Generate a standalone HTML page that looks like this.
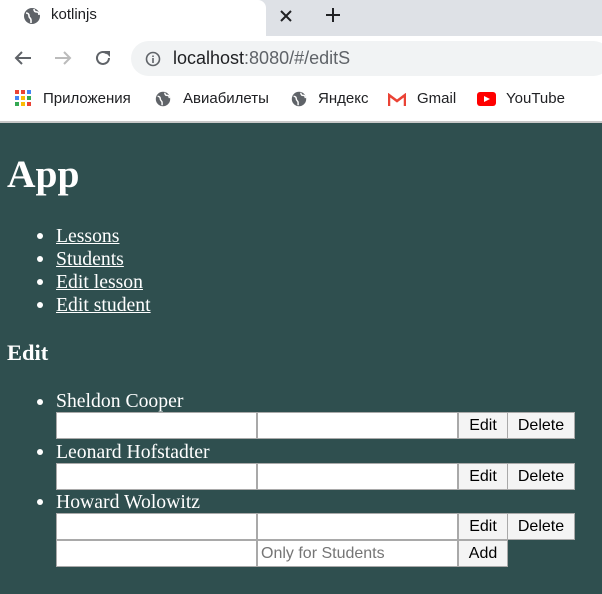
<!DOCTYPE html>
<html><head><meta charset="utf-8"><style>
*{margin:0;padding:0;box-sizing:border-box}
body{width:602px;height:594px;overflow:hidden;background:#2f4f4f;font-family:"Liberation Serif",serif;color:#fff;position:relative}
.a{position:absolute}
.ui{font-family:"Liberation Sans",sans-serif}
.tabbar{left:0;top:0;width:602px;height:36px;background:#dee1e6}
.tab{left:0;top:0;width:266px;height:36px;background:#fff;border-radius:0 8px 0 0}
.bar{left:0;top:36px;width:602px;height:85px;background:#fff}
.omni{left:131px;top:41px;width:480px;height:35px;background:#f1f3f4;border-radius:18px}
.sep{left:0;top:121px;width:602px;height:2px;background:#c8c8c8}
.li{font-size:19.7px;left:56px;line-height:23px}
.li u{text-decoration:underline}
.dot{width:6px;height:6px;border-radius:3px;background:#fff;left:37px}
.in{background:#fff;border:1px solid #a9a9a9;height:27px;width:201px}
.btn{background:#f4f4f4;border:1px solid #a9a9a9;height:27px;color:#000;font:16px "Liberation Sans",sans-serif;text-align:center;line-height:25px}
</style></head><body>
<div class="a tabbar"></div>
<div class="a tab"></div>
<svg class="a" style="left:22px;top:6px" width="20" height="20" viewBox="0 0 20 20"><circle cx="10" cy="10" r="8" fill="#5f6368"/><path d="M4 7c2 0 3 1 3 3s2 2 2 4v3M12 3c0 2 1 3 3 3s2 2 2 3" stroke="#fff" stroke-width="1.6" fill="none"/></svg>
<div class="a ui" style="left:51px;top:6px;font-size:15px;color:#202124">kotlinjs</div>
<svg class="a" style="left:280px;top:10px" width="12" height="12"><path d="M1 1l10 10M11 1L1 11" stroke="#202124" stroke-width="2"/></svg>
<svg class="a" style="left:325px;top:7px" width="16" height="16"><path d="M8 1v14M1 8h14" stroke="#202124" stroke-width="2"/></svg>
<div class="a bar"></div>
<div class="a omni"></div>
<svg class="a" style="left:14px;top:50px" width="18" height="16"><path d="M17 8H2M8 2L2 8l6 6" stroke="#5f6368" stroke-width="2" fill="none"/></svg>
<svg class="a" style="left:54px;top:50px" width="18" height="16"><path d="M1 8h15M10 2l6 6-6 6" stroke="#bbb" stroke-width="2" fill="none"/></svg>
<svg class="a" style="left:94px;top:49px" width="18" height="18" viewBox="0 0 18 18"><path d="M15 9a6 6 0 1 1-2-4.5" stroke="#5f6368" stroke-width="2" fill="none"/><path d="M10 2h6v6z" fill="#5f6368"/></svg>
<svg class="a" style="left:145px;top:51px" width="16" height="16" viewBox="0 0 16 16"><circle cx="8" cy="8" r="6.5" stroke="#5f6368" stroke-width="1.6" fill="none"/><path d="M8 7v5M8 4.5v1.5" stroke="#5f6368" stroke-width="1.6"/></svg>
<div class="a ui" style="left:173px;top:48px;font-size:18px;color:#202124">localhost<span style="color:#5f6368">:8080/#/editS</span></div>
<svg class="a" style="left:15px;top:90px" width="16" height="16"><rect x="0" y="0" width="4" height="4" fill="#ea4335"/><rect x="6" y="0" width="4" height="4" fill="#ea4335"/><rect x="12" y="0" width="4" height="4" fill="#4285f4"/><rect x="0" y="6" width="4" height="4" fill="#4285f4"/><rect x="6" y="6" width="4" height="4" fill="#fbbc05"/><rect x="12" y="6" width="4" height="4" fill="#34a853"/><rect x="0" y="12" width="4" height="4" fill="#34a853"/><rect x="6" y="12" width="4" height="4" fill="#fbbc05"/><rect x="12" y="12" width="4" height="4" fill="#ea4335"/></svg>
<div class="a ui" style="left:43px;top:90px;font-size:15px;color:#202124">Приложения</div>
<svg class="a" style="left:154px;top:90px" width="18" height="18" viewBox="0 0 20 20"><circle cx="10" cy="10" r="8" fill="#5f6368"/><path d="M4 7c2 0 3 1 3 3s2 2 2 4v3M12 3c0 2 1 3 3 3s2 2 2 3" stroke="#fff" stroke-width="1.6" fill="none"/></svg>
<div class="a ui" style="left:183px;top:90px;font-size:15px;color:#202124">Авиабилеты</div>
<svg class="a" style="left:290px;top:90px" width="18" height="18" viewBox="0 0 20 20"><circle cx="10" cy="10" r="8" fill="#5f6368"/><path d="M4 7c2 0 3 1 3 3s2 2 2 4v3M12 3c0 2 1 3 3 3s2 2 2 3" stroke="#fff" stroke-width="1.6" fill="none"/></svg>
<div class="a ui" style="left:318px;top:90px;font-size:15px;color:#202124">Яндекс</div>
<svg class="a" style="left:388px;top:93px" width="18" height="14"><path d="M1 13V2l8 6 8-6v11" stroke="#ea4335" stroke-width="2.5" fill="none"/></svg>
<div class="a ui" style="left:417px;top:90px;font-size:15px;color:#202124">Gmail</div>
<svg class="a" style="left:477px;top:92px" width="19" height="14"><rect width="19" height="14" rx="3" fill="#f00"/><path d="M7 4l6 3-6 3z" fill="#fff"/></svg>
<div class="a ui" style="left:506px;top:90px;font-size:15px;color:#202124">YouTube</div>
<div class="a sep"></div>

<div class="a" style="left:7px;top:151px;font-size:39.5px;font-weight:bold">App</div>
<div class="a dot" style="top:233px"></div><div class="a li" style="top:225px"><u>Lessons</u></div>
<div class="a dot" style="top:256px"></div><div class="a li" style="top:248px"><u>Students</u></div>
<div class="a dot" style="top:279px"></div><div class="a li" style="top:271px"><u>Edit lesson</u></div>
<div class="a dot" style="top:302px"></div><div class="a li" style="top:294px"><u>Edit student</u></div>
<div class="a" style="left:7px;top:340px;font-size:22.5px;font-weight:bold">Edit</div>

<div class="a dot" style="top:399px"></div><div class="a li" style="top:390px">Sheldon Cooper</div>
<div class="a in" style="left:56px;top:412px"></div><div class="a in" style="left:257px;top:412px"></div>
<div class="a btn" style="left:458px;top:412px;width:50px">Edit</div><div class="a btn" style="left:507px;top:412px;width:68px">Delete</div>

<div class="a dot" style="top:449px"></div><div class="a li" style="top:441px">Leonard Hofstadter</div>
<div class="a in" style="left:56px;top:463px"></div><div class="a in" style="left:257px;top:463px"></div>
<div class="a btn" style="left:458px;top:463px;width:50px">Edit</div><div class="a btn" style="left:507px;top:463px;width:68px">Delete</div>

<div class="a dot" style="top:499px"></div><div class="a li" style="top:491px">Howard Wolowitz</div>
<div class="a in" style="left:56px;top:513px"></div><div class="a in" style="left:257px;top:513px"></div>
<div class="a btn" style="left:458px;top:513px;width:50px">Edit</div><div class="a btn" style="left:507px;top:513px;width:68px">Delete</div>

<div class="a in" style="left:56px;top:540px"></div><div class="a in" style="left:257px;top:540px;font:16px 'Liberation Sans',sans-serif;color:#757575;padding-left:3px;line-height:26px">Only for Students</div>
<div class="a btn" style="left:458px;top:540px;width:50px;line-height:26px">Add</div>
</body></html>
